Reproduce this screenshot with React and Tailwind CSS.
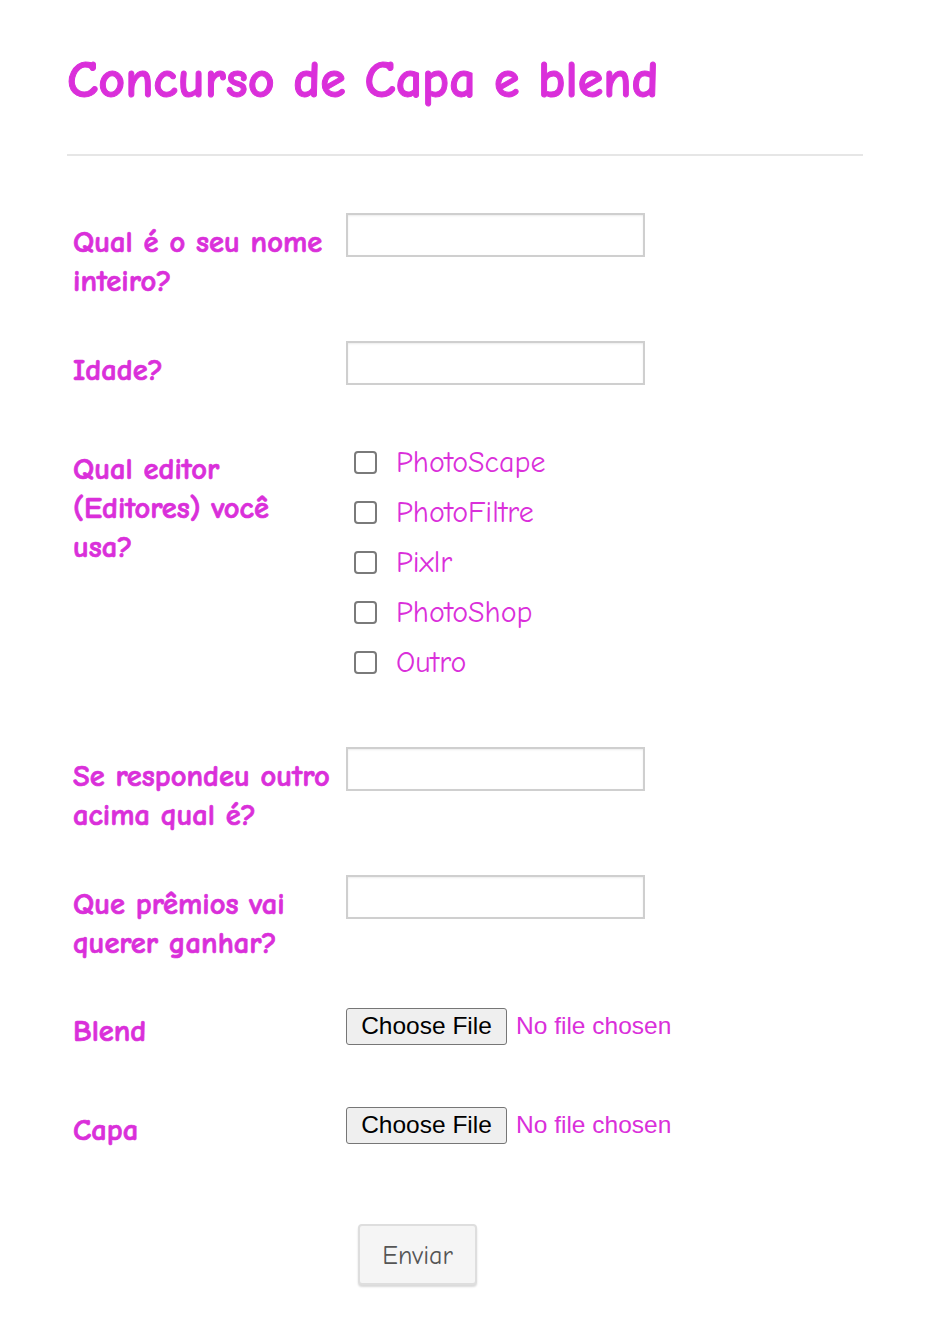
const comic = "font-['Comic_Sans_MS','Comic_Neue','DejaVu_Sans',sans-serif]";
const pink = "text-[#da2fda]";
const labelCls = `w-[273px] shrink-0 whitespace-nowrap text-[30.5px] leading-[39px] font-bold [-webkit-text-stroke:0.7px_#da2fda] ${pink}`;

function TextRow({ label, mt }) {
  return (
    <div className={`flex items-start ${mt}`}>
      <label className={`${labelCls} pt-[13px]`}>{label}</label>
      <input
        type="text"
        className="mt-[3px] h-[44px] w-[299px] border-2 border-[#cfcfcf] bg-white shadow-[inset_0_1px_2px_rgba(0,0,0,0.08)] outline-none"
      />
    </div>
  );
}

function FileRow({ label, mt }) {
  return (
    <div className={`flex items-start ${mt}`}>
      <span className={`${labelCls} pt-[4px]`}>{label}</span>
      <label className="flex items-center gap-[9px] font-['Liberation_Sans',Arial,sans-serif] text-[24.5px]">
        <span className="flex h-[37px] w-[161px] items-center justify-center rounded-[3px] border border-[#767676] bg-[#efefef] text-black">
          Choose File
        </span>
        <span className={pink}>No file chosen</span>
        <input type="file" className="hidden" />
      </label>
    </div>
  );
}

const editors = ["PhotoScape", "PhotoFiltre", "Pixlr", "PhotoShop", "Outro"];

export default function App() {
  return (
    <div className={`min-h-[1330px] bg-white ${comic}`}>
      <div className="mx-[67px] w-[796px] pt-[40px] pb-[40px]">
        <h1 className={`text-[52px] font-bold leading-[80px] [-webkit-text-stroke:1px_#da2fda] ${pink}`}>
          Concurso de Capa e blend
        </h1>
        <hr className="mt-[34px] border-t-2 border-[#e6e6e6]" />

        <form className="px-[6px]" onSubmit={(e) => e.preventDefault()}>
          <TextRow
            mt="mt-[54px]"
            label={
              <>
                Qual é o seu nome
                <br />
                inteiro?
              </>
            }
          />
          <TextRow mt="mt-[37px]" label="Idade?" />

          <div className="mt-[46px] flex items-start">
            <span className={`${labelCls} pt-[14px]`}>
              Qual editor
              <br />
              (Editores) você
              <br />
              usa?
            </span>
            <div className="mt-[1px] pl-[8px]">
              {editors.map((ed) => (
                <label key={ed} className="flex h-[50px] items-center gap-[19px]">
                  <input
                    type="checkbox"
                    className="h-[23px] w-[23px] appearance-none rounded-[4px] border-2 border-[#7a7a7a] bg-white"
                  />
                  <span className={`text-[30px] ${pink}`}>{ed}</span>
                </label>
              ))}
            </div>
          </div>

          <TextRow
            mt="mt-[57px]"
            label={
              <>
                Se respondeu outro
                <br />
                acima qual é?
              </>
            }
          />
          <TextRow
            mt="mt-[37px]"
            label={
              <>
                Que prêmios vai
                <br />
                querer ganhar?
              </>
            }
          />

          <FileRow mt="mt-[45px]" label="Blend" />
          <FileRow mt="mt-[56px]" label="Capa" />

          <button
            type="submit"
            className="ml-[285px] mt-[74px] h-[61px] w-[119px] rounded-[4px] border-2 border-[#dedede] bg-[#f5f5f5] pt-[4px] text-[26px] text-[#555] shadow-[0_2px_2px_rgba(0,0,0,0.15)]"
          >
            Enviar
          </button>
        </form>
      </div>
    </div>
  );
}
